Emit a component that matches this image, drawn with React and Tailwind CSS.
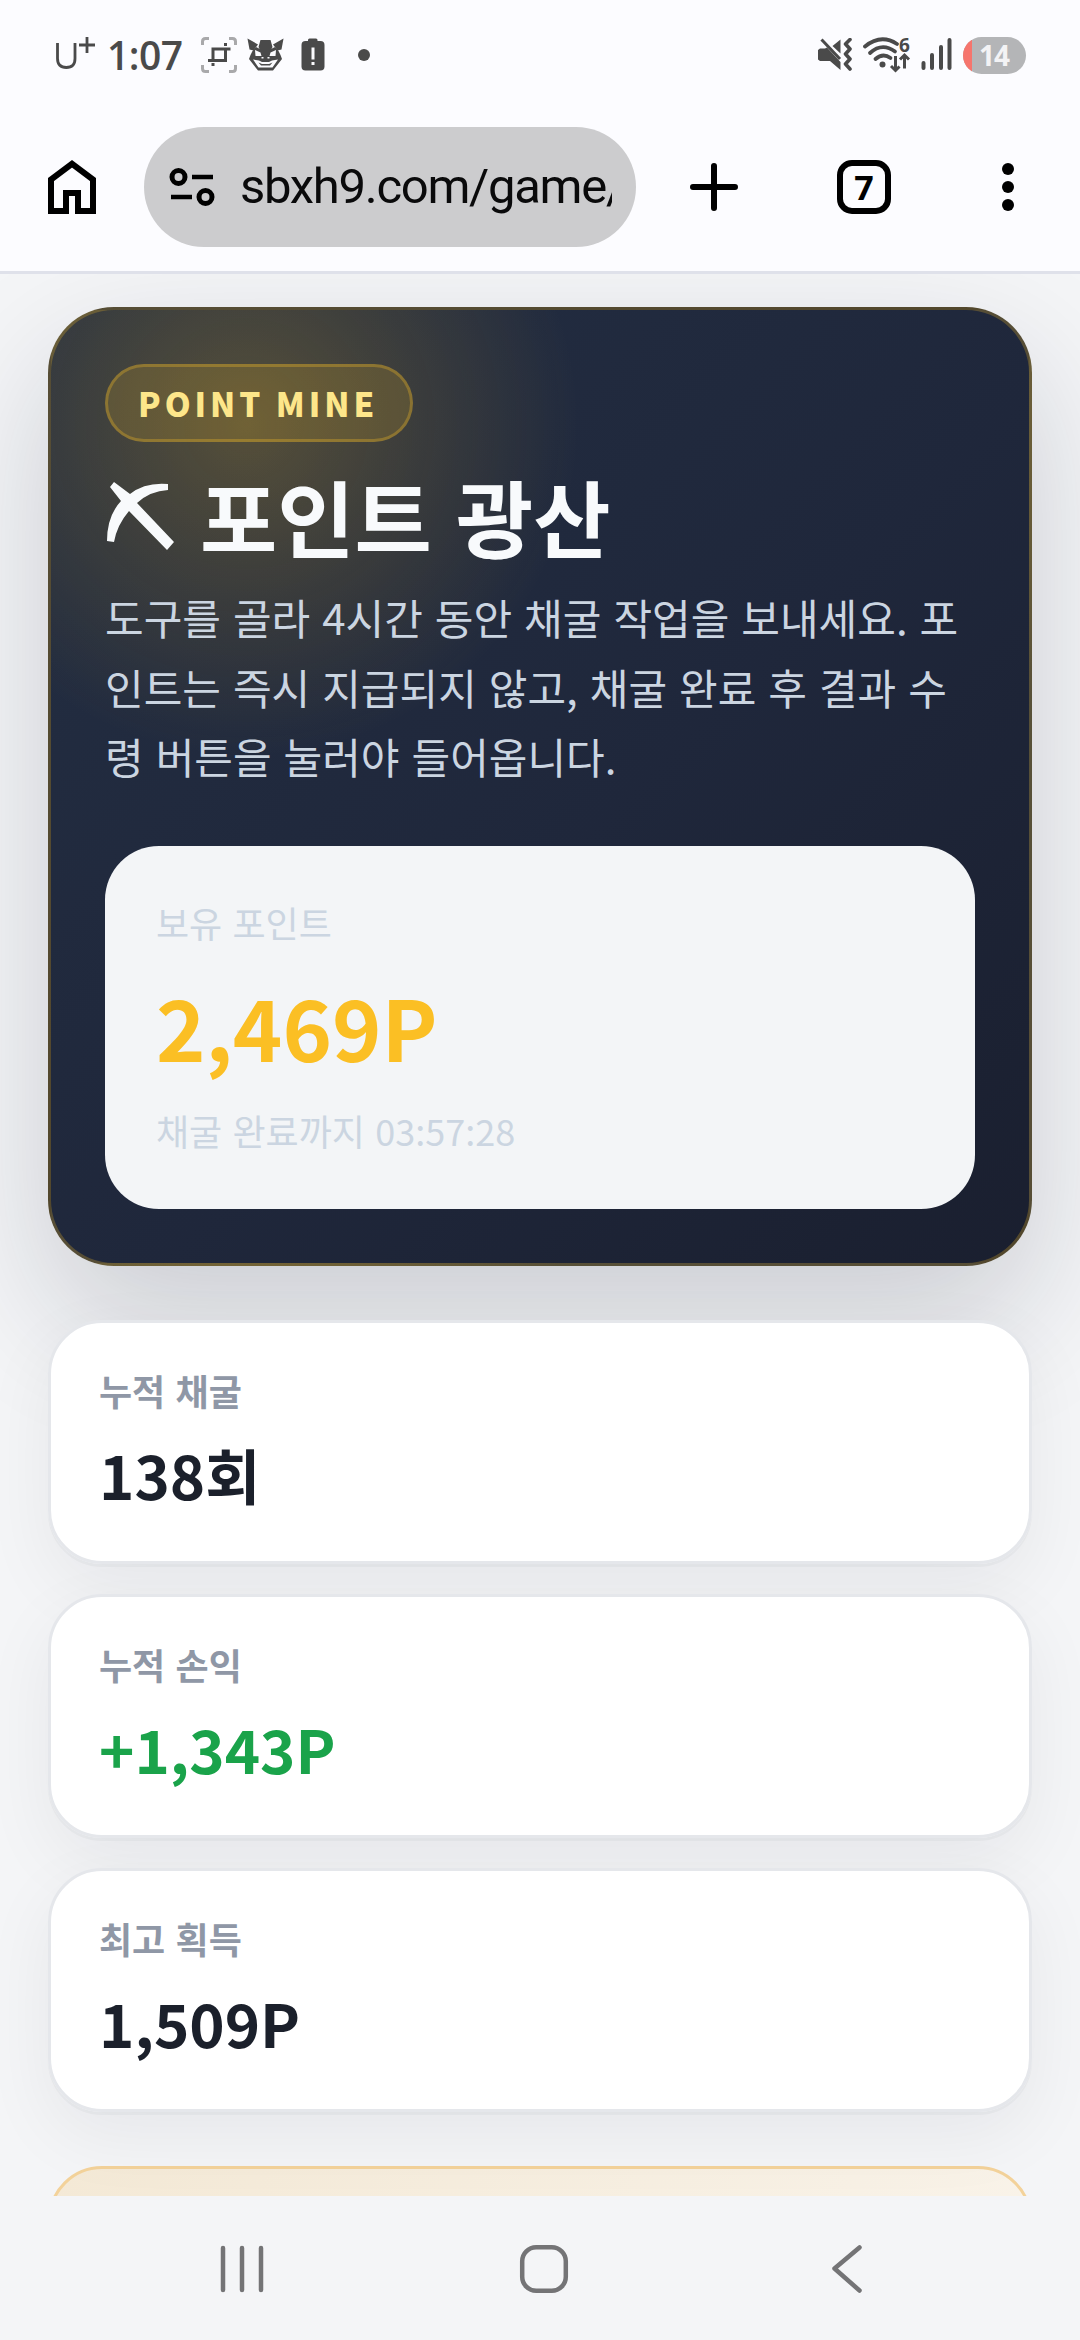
const stats = [
  { label: "누적 채굴", value: "138회", tone: "text-[#1b202b]" },
  { label: "누적 손익", value: "+1,343P", tone: "text-[#1aa34a]" },
  { label: "최고 획득", value: "1,509P", tone: "text-[#1b202b]" },
];

function CropIcon() {
  return (
    <svg className="ml-[18px] h-[36px] w-[36px]" viewBox="0 0 36 36" fill="none">
      <path d="M1.5 8V4.500Q1.500 1.500 4.500 1.500H8M28 1.500H31.500Q34.500 1.500 34.500 4.500V8M34.500 28V31.500Q34.500 34.500 31.500 34.500H28M8 34.500H4.500Q1.500 34.500 1.500 31.500V28" stroke="#a9a9ab" strokeWidth="3" />
      <path d="M12 24V12H29.500M24.500 12V23.500H7" stroke="#4a4a4a" strokeWidth="3" />
      <path d="M24.500 6V9M12 26V29" stroke="#4a4a4a" strokeWidth="3" />
    </svg>
  );
}

function CatIcon() {
  return (
    <svg className="ml-[10px] h-[34px] w-[37px]" viewBox="0 0 37 34">
      <g fill="#4a4a4a">
        <path d="M0.500 0.500L11 6.500L6.500 12.500L2.500 11.500Z" />
        <path d="M36.500 0.500L26 6.500L30.500 12.500L34.500 11.500Z" />
        <path d="M13.500 2H23.500L25.500 9L21.500 17H15.500L11.500 9Z" />
        <path d="M5.500 13L3.500 17L2 21L11 32.500H26L35 21L33.500 17L31.500 13L28 9L24 11L13 11L9 9Z" />
      </g>
      <g fill="#fbfbfe">
        <path d="M8 12L13.500 14.500L14.500 18L8.500 18Z" />
        <path d="M29 12L23.500 14.500L22.500 18L28.500 18Z" />
        <path d="M6 21.500L12 22.500L15 24H22L25 22.500L31 21.500L25.500 29.500H11.500Z" />
        <path d="M14.500 19H16.500V20.500H14.500ZM20.500 19H22.500V20.500H20.500Z" />
      </g>
      <path fill="#4a4a4a" d="M11.500 24.500L15 26H22L25.500 24.500L23 27.500H14Z" />
    </svg>
  );
}

function AlertBatteryIcon() {
  return (
    <svg className="ml-[17px] h-[34px] w-[24px]" viewBox="0 0 24 34">
      <path fill="#4a4a4a" d="M7 3V2Q7 0.500 8.500 0.500H15Q16.500 0.500 16.500 2V3H19.500Q23.500 3 23.500 7V28.500Q23.500 32.500 19.500 32.500H4.500Q0.500 32.500 0.500 28.500V7Q0.500 3 4.500 3Z" />
      <path d="M12 9.500V21.500M12 24V27" stroke="#fbfbfe" strokeWidth="3" />
    </svg>
  );
}

function MuteVibrateIcon() {
  return (
    <svg className="h-[34px] w-[36px]" viewBox="0 0 36 34" fill="none">
      <path fill="#4a4a4a" d="M1 12L3 10.500H8L10 9.500L23.500 24V32L13 23H3L1 21.500ZM15.500 8L23.500 1.500V15.500Z" />
      <path d="M4.500 1.500L23 21" stroke="#4a4a4a" strokeWidth="3" />
      <path d="M33 1.500L28.500 6L33 11L28.500 16L33 21L28.500 26L33 31" stroke="#4a4a4a" strokeWidth="3.600" strokeLinejoin="round" strokeLinecap="round" />
    </svg>
  );
}

function WifiIcon() {
  return (
    <div className="relative ml-[10px] h-[36px] w-[48px]">
      <svg className="h-[36px] w-[48px]" viewBox="0 0 48 36" fill="none" stroke="#4a4a4a">
        <path d="M2 9.500Q18 -3.500 34 7" strokeWidth="3.800" strokeLinecap="round" />
        <path d="M7 16Q19 5 32 14.500" strokeWidth="3.800" strokeLinecap="round" />
        <path d="M12.500 22Q20 15.500 27.500 21" strokeWidth="3.800" strokeLinecap="round" />
        <circle cx="19.500" cy="27.500" r="3" fill="#4a4a4a" stroke="none" />
        <path d="M32.500 19V33.500M28 29L32.500 33.500L36.500 29.500M41.500 31.500V18M37 22.500L41.500 18L46 22.500" strokeWidth="3" />
      </svg>
      <span className="absolute left-[36px] top-[-1px] font-['Open_Sans'] text-[19px] font-bold leading-[19px]">6</span>
    </div>
  );
}

function StatusBar() {
  return (
    <div className="flex h-[110px] items-start pt-[37px] pl-[54px] pr-[54px] text-[#4a4a4a]">
      <div className="flex h-[36px] w-full items-center">
        <svg className="h-[36px] w-[42px]" viewBox="0 0 42 36" fill="none" stroke="#4a4a4a">
          <path d="M3.500 6V21.500Q3.500 30.500 12.300 30.500T21 21.500V6" strokeWidth="2.800" />
          <path d="M33 0V16M25 8H41" strokeWidth="2.800" />
        </svg>
        <span className="ml-[11px] w-[76px] whitespace-nowrap font-['Open_Sans'] text-[39px] font-semibold leading-[36px] tracking-[-0.500px]">1:07</span>
        <CropIcon />
        <CatIcon />
        <AlertBatteryIcon />
        <span className="ml-[33px] h-[12px] w-[12px] rounded-full bg-[#4a4a4a]" />
        <div className="ml-auto flex items-center">
          <MuteVibrateIcon />
          <WifiIcon />
          <svg className="ml-[10px] h-[34px] w-[32px]" viewBox="0 0 32 34" stroke="#4a4a4a" strokeWidth="4" strokeLinecap="round">
            <path d="M2.500 25V30M11 17V30M20 9V30M28.500 2V30" />
          </svg>
          <div className="ml-[10px] flex h-[37px] w-[63px] items-center overflow-hidden rounded-full bg-[#b4b5b7]">
            <span className="h-full w-[9px] bg-[#f6756d]" />
            <span className="ml-[7px] font-['Open_Sans'] text-[28px] font-bold leading-[36px] tracking-[-1px] text-[#f3f3f5]">14</span>
          </div>
        </div>
      </div>
    </div>
  );
}

function BrowserBar() {
  return (
    <div className="flex h-[164px] items-start border-b-[3px] border-[#dfe1ea] pt-[17px] pl-[48px]">
      <div className="flex h-[120px] items-center">
        <svg className="h-[54px] w-[48px]" viewBox="0 0 48 54" fill="none">
          <path d="M3 51V19.500L24 3.800L45 19.500V51H30V33H18V51Z" stroke="#000" strokeWidth="6" />
        </svg>
        <div className="ml-[48px] flex h-[120px] w-[492px] items-center rounded-full bg-[#ccccce] pl-[25px]">
          <svg className="h-[42px] w-[46px]" viewBox="0 0 46 42" fill="none" stroke="#000" strokeWidth="5">
            <circle cx="9.500" cy="11" r="6.500" />
            <path d="M23 11H44M2 31H23" strokeWidth="4.600" />
            <circle cx="36.500" cy="31" r="6.500" />
          </svg>
          <span className="ml-[25px] w-[372px] overflow-hidden whitespace-nowrap font-['Roboto'] text-[49px] leading-[64px] tracking-[-1.300px] text-[#0a0a0b]">sbxh9.com/game/</span>
        </div>
        <svg className="ml-[54px] h-[48px] w-[48px]" viewBox="0 0 48 48" stroke="#000" strokeWidth="6" strokeLinecap="round">
          <path d="M24 3V45M3 24H45" />
        </svg>
        <div className="ml-[99px] flex h-[54px] w-[54px] items-center justify-center rounded-[15px] border-[6px] border-black font-['Open_Sans'] text-[34px] font-bold leading-none text-black">7</div>
        <svg className="ml-[111px] h-[48px] w-[12px]" viewBox="0 0 12 48">
          <circle cx="6" cy="6" r="6" />
          <circle cx="6" cy="24" r="6" />
          <circle cx="6" cy="42" r="6" />
        </svg>
      </div>
    </div>
  );
}

function Hero() {
  return (
    <section className="h-[959px] rounded-[66px] border-[3px] border-[rgba(251,191,36,0.25)] bg-[radial-gradient(circle_at_20%_12%,rgba(251,191,36,0.24),rgba(251,191,36,0)_29%),linear-gradient(135deg,#232e42,#1f273b_55%,#1a1f2f)] p-[54px] shadow-[0_54px_135px_rgba(15,23,42,0.18)]">
      <div className="flex h-[78px] w-[308px] items-center rounded-full border-[3px] border-[rgba(251,191,36,0.3)] bg-[rgba(251,191,36,0.16)] pl-[30px]">
        <span className="whitespace-nowrap text-[33px] font-black leading-[72px] tracking-[3.960px] text-[#fde68a]">POINT MINE</span>
      </div>
      <h1 className="mt-[23px] flex h-[101px] items-center text-[84px] font-bold leading-[101px] text-[#f8fafc]">
        <svg className="ml-[2px] mr-[25px] h-[68px] w-[68px]" viewBox="0 0 68 68" fill="#f8fafc">
          <path d="M3 5L7 0L23 12Q38 0 61 2V8Q43 9 30 21L67 60L60 68L22 29Q10 43 7 60L0 59Q0 34 14 19Z" />
        </svg>
        <span className="whitespace-nowrap [word-spacing:5px]">포인트 광산</span>
      </h1>
      <p className="mt-[16px] whitespace-nowrap text-[42px] leading-[69.600px] text-[#cbd5e1] [word-spacing:2.600px]">
        도구를 골라 4시간 동안 채굴 작업을 보내세요. 포<br />
        인트는 즉시 지급되지 않고, 채굴 완료 후 결과 수<br />
        령 버튼을 눌러야 들어옵니다.
      </p>
      <div className="mt-[55px] h-[363px] rounded-[54px] bg-[#f3f5f7] px-[51px] pt-[50px] text-[36px] leading-[52px] text-[#cbd5e1] [word-spacing:2.200px]">
        <div>보유 포인트</div>
        <div className="mt-[17px] mb-[18px] text-[84px] font-bold leading-[121px] text-[#fbbf24]">2,469P</div>
        <div>채굴 완료까지 03:57:28</div>
      </div>
    </section>
  );
}

function StatCard({ label, value, tone }) {
  return (
    <div className="rounded-[54px] shadow-[0_3px_0_rgba(15,23,42,0.03),0_24px_72px_rgba(15,23,42,0.06)]">
      <div className="relative z-10 h-[244px] rounded-[54px] border-[3px] border-[#e5e7eb] bg-white px-[48px] pt-[41px]">
        <div className="text-[36px] font-bold leading-[52px] text-[#8f97a6] [word-spacing:2.200px]">{label}</div>
        <div className={`mt-[14px] text-[60px] font-bold leading-[87px] ${tone}`}>{value}</div>
      </div>
    </div>
  );
}

function NavBar() {
  return (
    <nav className="relative z-20 flex h-[144px] items-start bg-[#f4f5f7] pt-[48px] pl-[220px]">
      <svg className="h-[50px] w-[44px]" viewBox="0 0 44 50" stroke="#747476" strokeWidth="4.500" strokeLinecap="round">
        <path d="M3 4V46M22 4V46M41 4V46" />
      </svg>
      <svg className="ml-[255px] h-[50px] w-[50px]" viewBox="0 0 50 50" fill="none" stroke="#747476" strokeWidth="4.500">
        <rect x="3.200" y="3.200" width="43.600" height="43.600" rx="14" />
      </svg>
      <svg className="ml-[262px] h-[50px] w-[32px]" viewBox="0 0 32 50" fill="none" stroke="#747476" strokeWidth="4.500" strokeLinecap="round" strokeLinejoin="round">
        <path d="M28.500 3.500L3.500 24.500L28.500 46.500" />
      </svg>
    </nav>
  );
}

export default function App() {
  return (
    <div className="flex h-[2340px] w-[1080px] flex-col overflow-hidden bg-[#f4f5f7] font-['Noto_Sans_CJK_KR',sans-serif]">
      <header className="relative z-20 bg-[#fcfcff]">
        <StatusBar />
        <BrowserBar />
      </header>
      <main className="h-[1922px] overflow-hidden px-[48px] pt-[33px]">
        <Hero />
        <div className="mt-[54px] flex flex-col gap-[30px]">
          {stats.map((s) => (
            <StatCard key={s.label} {...s} />
          ))}
        </div>
        <section className="mt-[54px] h-[200px] rounded-[54px] border-[3px] border-[#f3d29a] bg-[linear-gradient(100deg,#f4e9d6,#f9f3e9)]" />
      </main>
      <NavBar />
    </div>
  );
}
